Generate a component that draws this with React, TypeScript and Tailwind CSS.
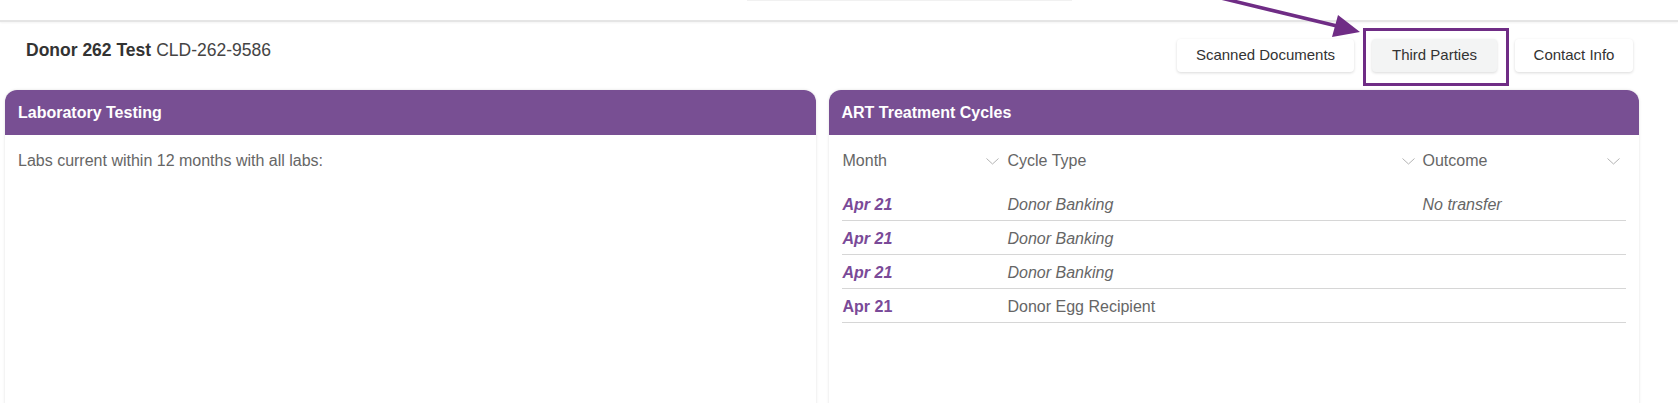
import React from "react";

const rows = [
  { month: "Apr 21", type: "Donor Banking", outcome: "No transfer", italic: true },
  { month: "Apr 21", type: "Donor Banking", outcome: "", italic: true },
  { month: "Apr 21", type: "Donor Banking", outcome: "", italic: true },
  { month: "Apr 21", type: "Donor Egg Recipient", outcome: "", italic: false },
];

function Chevron() {
  return (
    <svg width="13" height="7" viewBox="0 0 13 7" fill="none" className="shrink-0">
      <path d="M0.5 0.5 L6.5 6 L12.5 0.5" stroke="#b3b3b3" strokeWidth="1" />
    </svg>
  );
}

function Card({ title, children }: { title: string; children?: React.ReactNode }) {
  return (
    <div className="flex flex-col rounded-t-[12px] bg-white shadow-[0_0_3px_rgba(0,0,0,0.12)]">
      <div className="h-[45px] flex items-center px-[13px] rounded-t-[12px] bg-[#784f93]">
        <h3 className="text-white text-[16px] font-bold">{title}</h3>
      </div>
      <div className="h-[280px]">{children}</div>
    </div>
  );
}

export default function App() {
  return (
    <div className="relative w-[1678px] h-[403px] overflow-hidden bg-white font-['Liberation_Sans',Arial,sans-serif]">
      {/* top bar */}
      <div className="relative h-[22px] border-b-2 border-[#e5e5e5] shadow-[0_1px_2px_rgba(0,0,0,0.05)]">
        <div className="absolute left-[747px] top-0 w-[325px] h-[1px] bg-[#f1f1f1]" />
      </div>

      {/* title row */}
      <div className="h-[68px] flex justify-between items-start pl-[26px] pr-[45px] pt-[17px]">
        <div className="h-[22px] flex items-center text-[17.5px] text-[#444]">
          <span className="font-bold text-[#333]">Donor 262 Test</span>
          <span className="ml-[5px]">CLD-262-9586</span>
        </div>
        <div className="flex gap-[18px]">
          <button className="h-[33px] w-[177px] rounded-[4px] bg-white text-[15px] text-[#333] shadow-[0_1px_3px_rgba(0,0,0,0.15)]">
            Scanned Documents
          </button>
          <div className="relative">
            <button className="h-[33px] w-[125px] rounded-[4px] bg-[#f3f4f4] text-[15px] text-[#333] shadow-[0_1px_3px_rgba(0,0,0,0.15)]">
              Third Parties
            </button>
            <div className="absolute left-[-9px] right-[-12px] top-[-11px] bottom-[-14px] border-[3px] border-[#6f2c85] pointer-events-none" />
          </div>
          <button className="h-[33px] w-[118px] rounded-[4px] bg-white text-[15px] text-[#333] shadow-[0_1px_3px_rgba(0,0,0,0.15)]">
            Contact Info
          </button>
        </div>
      </div>

      {/* cards */}
      <div className="grid grid-cols-2 gap-[13px] pl-[5px] pr-[39px]">
        <Card title="Laboratory Testing">
          <p className="px-[13px] pt-[14px] text-[16px] text-[#666]">
            Labs current within 12 months with all labs:
          </p>
        </Card>
        <Card title="ART Treatment Cycles">
          <div className="px-[13px] pt-[14px] text-[16px]">
            <div className="grid grid-cols-[160px_415px_1fr] h-[24px] items-center text-[#666]">
              <div className="flex items-center justify-between pl-[1px] pr-[3px]">
                <span>Month</span>
                <Chevron />
              </div>
              <div className="flex items-center justify-between pl-[6px] pr-[2px]">
                <span>Cycle Type</span>
                <Chevron />
              </div>
              <div className="flex items-center justify-between pl-[6px] pr-[6px]">
                <span>Outcome</span>
                <Chevron />
              </div>
            </div>
            <div className="mt-[14px]">
              {rows.map((row, idx) => (
                <div
                  key={idx}
                  className="grid grid-cols-[160px_415px_1fr] h-[34px] pt-[3px] items-center border-b border-[#d6d6d6]"
                >
                  <span className={`pl-[1px] font-bold text-[#7a4a98] ${row.italic ? "italic" : ""}`}>
                    {row.month}
                  </span>
                  <span className={`pl-[6px] text-[#666] ${row.italic ? "italic" : ""}`}>{row.type}</span>
                  <span className="pl-[6px] italic text-[#666]">{row.outcome}</span>
                </div>
              ))}
            </div>
          </div>
        </Card>
      </div>

      {/* annotation arrow */}
      <svg className="absolute left-0 top-0 pointer-events-none" width="1678" height="60" viewBox="0 0 1678 60">
        <line x1="1196" y1="-8" x2="1337" y2="26" stroke="#6f2c85" strokeWidth="3.5" />
        <polygon points="1360,32 1332,37 1338,15" fill="#6f2c85" />
      </svg>
    </div>
  );
}
